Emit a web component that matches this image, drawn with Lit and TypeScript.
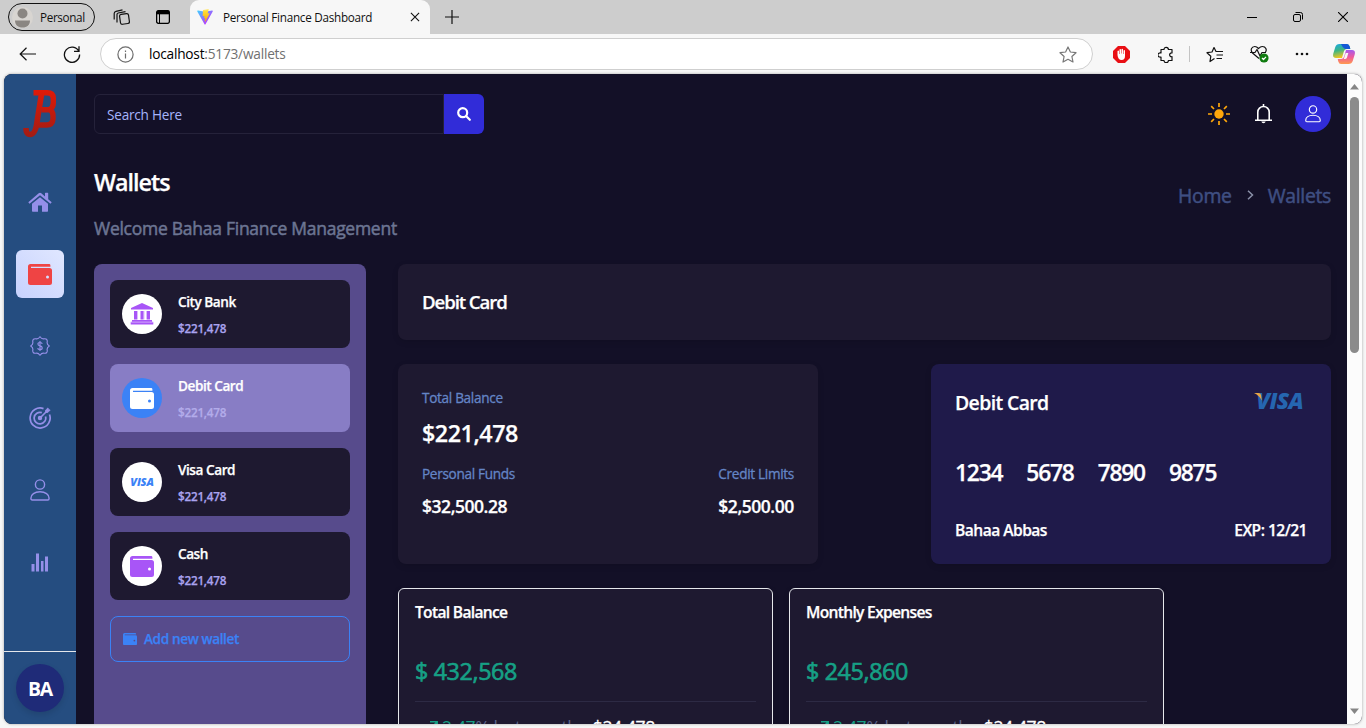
import { LitElement, html, css } from "lit";
import { customElement } from "lit/decorators.js";

const wallet = (w = 24) => html`<svg width=${w} height=${(w * 21) / 24} viewBox="0 0 24 21" fill="currentColor"><path fill-rule="evenodd" d="M2.6 0H21C21.9 0 22.4.6 22.4 1.4V2.7H3V3.9H21.5A2.5 2.5 0 0 1 24 6.4V18.5A2.5 2.5 0 0 1 21.5 21H2.5A2.5 2.5 0 0 1 0 18.5V2.6A2.6 2.6 0 0 1 2.6 0ZM19.5 11.4A1.5 1.5 0 1 0 19.5 14.4A1.5 1.5 0 1 0 19.5 11.4Z"/></svg>`;
const person = (w: number, sw: number) => html`<svg width=${w} height=${w * 1.1} viewBox="0 0 20 22" fill="none" stroke="currentColor" stroke-width=${sw} stroke-linejoin="round"><circle cx="10" cy="5.5" r="4.6"/><path d="M.9 19.2C.9 15.4 4.6 12.8 10 12.8S19.1 15.4 19.1 19.2C19.1 20.6 18.6 21 17.8 21H2.2C1.4 21 .9 20.6 .9 19.2Z"/></svg>`;
const bank = html`<svg width="24" height="22" viewBox="0 0 24 22" fill="currentColor"><path d="M12 0 23 5V6.600H1V5ZM4 8H7V16.500H4ZM10.500 8H13.500V16.500H10.500ZM17 8H20V16.500H17ZM2 17H22V18.700H2ZM.7 19.600H23.300V21.600H.7Z"/><path opacity=".4" d="M7 8H8V16.500H7ZM13.500 8H14.500V16.500H13.500ZM16 8H17V16.500H16ZM.7 18.500H23.300V20H.7Z"/></svg>`;

const wallets = [
  { name: "City Bank", icon: bank, look: "violet" },
  { name: "Debit Card", icon: wallet(), look: "blue" },
  { name: "Visa Card", icon: html`<span class="visa small">VISA</span>`, look: "visaicon" },
  { name: "Cash", icon: wallet(), look: "violet" },
];
const stats = [
  { name: "Total Balance", amount: "$ 432,568" },
  { name: "Monthly Expenses", amount: "$ 245,860" },
];

@customElement("app-root")
export class AppRoot extends LitElement {
  static styles = css`
    :host { display: block; width: 1366px; height: 728px; overflow: hidden; background: #f7f7f7;
      font-family: "Open Sans", "Noto Sans", sans-serif; letter-spacing: -0.014em; }
    * { box-sizing: border-box; }
    svg { display: block; flex: none; }
    .tabs { height: 34px; background: #cdcdcd; display: flex; align-items: center; font-size: 11.7px; color: #111; }
    .profile { margin-left: 8px; width: 87px; height: 28px; border: 1.3px solid #111; border-radius: 14px; display: flex; align-items: center; gap: 7px; padding-left: 3px; }
    .profile span { padding-bottom: 1px; letter-spacing: -.03em; }
    .ws { margin-left: 18px; }
    .ta { margin-left: 26px; }
    .tab { margin-left: 20px; width: 240px; height: 34px; background: #f7f7f7; border-radius: 9px 9px 0 0; display: flex; align-items: center; padding: 0 10px 0 7px; }
    .tab span { margin-left: 10px; flex: 1; white-space: nowrap; letter-spacing: -0.022em; padding-bottom: 1px; }
    .plus { margin-left: 15px; }
    .wctl { margin-left: auto; display: flex; align-items: center; gap: 35px; margin-right: 18px; }
    .wctl svg:last-child { margin-left: -1px; }
    .bar { height: 40px; display: flex; align-items: center; background: #f7f7f7; }
    .back { margin-left: 19px; }
    .reload { margin-left: 26px; }
    .url { margin-left: 19px; width: 993px; height: 32px; border: 1px solid #cfcfcf; border-radius: 16px; background: #fff; display: flex; align-items: center; padding: 0 15px 0 16px; font-size: 13.7px; color: #707070; }
    .url span { margin-left: 15px; flex: 1; padding-bottom: 1px; }
    .url b { font-weight: 400; color: #000; }
    .ext { display: flex; align-items: center; flex: 1; }
    .e1 { margin-left: 19.5px; } .e2 { margin-left: 28px; }
    .sep { width: 1px; height: 16px; background: #c4c4c4; margin-left: 15px; }
    .e3 { margin-left: 16px; } .e4 { margin-left: 27px; } .e5 { margin-left: 26px; } .e6 { margin-left: 24px; }
    .view { margin: 0 4px; height: 650px; border-radius: 8px; overflow: hidden; display: flex; background: #131027; box-shadow: 0 0 3px rgba(0,0,0,.35); }
    .side { width: 72px; background: #254d80; display: flex; flex-direction: column; align-items: center; color: #958fe8; }
    .logo { height: 80px; padding-top: 15px; }
    .nav { display: flex; flex-direction: column; gap: 24px; padding-top: 24px; flex: 1; }
    .nav div { width: 48px; height: 48px; border-radius: 6px; display: flex; align-items: center; justify-content: center; }
    .nav .on { background: linear-gradient(45deg, #c7d2fe, #e0e7ff); color: #ef4444; }
    .foot { width: 100%; height: 73px; border-top: 1px solid #e5e7eb; display: flex; justify-content: center; padding-top: 12px; }
    .ba { width: 48px; height: 48px; border-radius: 50%; background: #1f2b78; color: #fff; font-size: 19.4px; font-weight: 700; display: flex; align-items: center; justify-content: center; letter-spacing: -.06em; box-shadow: 0 3px 6px rgba(0,0,0,.12); }
    .main { flex: 1; padding: 20px 16px 0 18px; height: 650px; overflow: hidden; color: #fff; }
    .top { height: 40px; display: flex; align-items: center; }
    .search { width: 350px; height: 40px; border: 1px solid #25223a; border-radius: 6px 0 0 6px; color: #a5b4fc; font-size: 13.6px; line-height: 40px; padding-left: 12px; }
    .go { width: 40px; height: 40px; background: #312cd8; border-radius: 0 6px 6px 0; display: flex; align-items: center; justify-content: center; }
    .acts { margin-left: auto; display: flex; align-items: center; }
    .bell { margin-left: 25px; margin-right: 23px; }
    .user { width: 36px; height: 36px; border-radius: 50%; background: #312cd8; display: flex; align-items: center; justify-content: center; }
    .title { display: flex; justify-content: space-between; height: 130px; padding-top: 32px; }
    .bold { font-weight: 600; -webkit-text-stroke: .25px currentColor; }
    h1 { margin: 0; font-size: 23.3px; line-height: 32px; letter-spacing: -.042em; }
    .sub { margin-top: 14px; font-size: 17.5px; line-height: 32px; color: #6c7593; letter-spacing: -.015em; -webkit-text-stroke: .5px currentColor; }
    .crumb { display: flex; align-items: center; height: 30px; margin-top: 14px; font-size: 19.4px; color: #3f4f82; letter-spacing: -.016em; -webkit-text-stroke: .5px currentColor; }
    .crumb svg { margin: 0 14px 1px 15px; }
    .cols { display: flex; gap: 32px; align-items: flex-start; }
    .list { width: 272px; height: 640px; border-radius: 8px; background: #574b8c; padding: 16px; display: flex; flex-direction: column; gap: 16px; }
    .item { height: 68px; background: #1e1930; border-radius: 8px; display: flex; align-items: center; padding: 2px 0 0 12px; gap: 16px; }
    .item.on { background: #887dc5; }
    .dot { width: 40px; height: 40px; margin-top: -2px; border-radius: 50%; background: #fff; display: flex; align-items: center; justify-content: center; }
    .violet { color: #a855f7; } .visaicon { color: #3b82f6; }
    .blue { background: #3b82f6; color: #fff; }
    .nm { font-size: 13.6px; line-height: 24px; letter-spacing: -.033em; }
    .am { font-size: 11.7px; line-height: 24px; margin-top: 2px; color: #a9a2ee; }
    .item.on .am { color: #b3acea; }
    .add { height: 46px; border: 1px solid #3b82f6; border-radius: 8px; display: flex; align-items: center; gap: 7px; padding-left: 12px; color: #3b82f6; font-size: 13.6px; letter-spacing: -.028em; }
    .add span { padding-bottom: 1px; }
    .detail { flex: 1; display: flex; flex-direction: column; gap: 24px; }
    .card { background: #1e1930; border-radius: 8px; box-shadow: 0 2px 6px rgba(0,0,0,.12); }
    .head { height: 76px; padding: 23px 24px; font-size: 18.6px; line-height: 30px; letter-spacing: -.058em; }
    .pair { display: flex; justify-content: space-between; }
    .balance { width: 420px; height: 200px; padding: 22px 24px; }
    .lab { color: #6485c6; font-size: 13.6px; line-height: 24px; letter-spacing: -.023em; -webkit-text-stroke: .3px currentColor; }
    .big { font-size: 23.3px; line-height: 32px; margin: 7px 0 13px; letter-spacing: -.02em; }
    .mid { font-size: 17.5px; line-height: 28px; margin-top: 6px; letter-spacing: -.026em; }
    .row { display: flex; justify-content: space-between; align-items: center; }
    .credit { width: 400px; height: 200px; background: #1f1a4a; padding: 24px; }
    .cn { font-size: 19.4px; line-height: 30px; letter-spacing: -.031em; }
    .brand { display: flex; align-items: flex-start; margin: -5px 4px 0 0; }
    .visa { font-style: italic; font-weight: 800; letter-spacing: -.02em; -webkit-text-stroke: 0; }
    .visa.small { font-size: 11px; line-height: 12px; }
    .visa.large { font-size: 22.5px; line-height: 22px; color: #2566b0; margin-left: -6px; letter-spacing: -.03em; }
    .wedge { position: relative; z-index: 1; margin: 3px 0 0 0; }
    .nums { display: flex; gap: 24px; font-size: 22.8px; line-height: 32px; margin-top: 39px; letter-spacing: -.053em; }
    .own { font-size: 15.6px; line-height: 24px; margin-top: 29px; letter-spacing: -.034em; }
    .stats { display: flex; gap: 16px; }
    .stat { width: 375px; height: 180px; border: 1px solid #e5e7eb; padding: 11px 16px; border-radius: 6px; }
    .st { font-size: 15.6px; line-height: 24px; letter-spacing: -.044em; }
    .sa { font-size: 23.3px; line-height: 32px; margin-top: 31px; color: #16a085; padding-bottom: 14px; border-bottom: 1px solid #2d2a44; letter-spacing: -.016em; -webkit-text-stroke: .65px currentColor; }
    .tr { display: flex; align-items: center; padding-left: 14px; margin-top: 11px; font-size: 17.5px; line-height: 28px; letter-spacing: -.02em; color: #5b648a; white-space: pre; }
    .tr svg { margin-top: -4px; }
    .tr i { font-style: normal; color: #16a085; margin-left: 4px; }
    .tr b { font-weight: 400; color: #fff; margin-left: 15px; -webkit-text-stroke: .3px #fff; }
    .scroll { width: 15px; background: #fcfcfc; display: flex; flex-direction: column; align-items: center; padding: 10px 0; }
    .thumb { width: 9px; height: 256px; margin-top: 7px; background: #8b8b8b; border-radius: 5px; }
    .down { margin-top: auto; }
  `;

  chrome() {
    return html`
      <div class="tabs">
        <div class="profile"><svg width="21" height="21" viewBox="0 0 21 21"><circle cx="10.500" cy="10.500" r="10.500" fill="#d8d5d1"/><circle cx="10.500" cy="6.500" r="5" fill="#8a8682"/><path d="M3 13.500H18C18 18 15 20.500 10.500 20.500S3 18 3 13.500Z" fill="#8a8682"/></svg><span>Personal</span></div>
        <svg class="ws" width="17" height="17" viewBox="0 0 17 17" fill="none" stroke="#111" stroke-width="1.200" stroke-linejoin="round"><rect x="7" y="5" width="9" height="10" rx="1.800" transform="rotate(-8 11 10)"/><path d="M4 13.500V5.500Q4 4.300 5.200 4L12.500 2.600M1.200 10.500V4.500Q1.200 2.700 3 2.300L9.500.8"/></svg>
        <svg class="ta" width="14" height="14" viewBox="0 0 14 14"><rect x=".6" y=".6" width="12.800" height="12.800" rx="2" fill="none" stroke="#000" stroke-width="1.300"/><path d="M1 1H13V4.300H1Z"/><path d="M3.500 4V13" stroke="#000"/></svg>
        <div class="tab">
          <svg width="16" height="16" viewBox="0 0 32 32"><defs><linearGradient id="va" x2=".8" y2=".8"><stop stop-color="#41D1FF"/><stop offset="1" stop-color="#BD34FE"/></linearGradient><linearGradient id="vb" x2="0" y2="1"><stop stop-color="#FFEA83"/><stop offset=".2" stop-color="#FFDD35"/><stop offset="1" stop-color="#FFA800"/></linearGradient></defs><path d="M31.500 4.800 17 30.600Q16 32 15 30.600L.6 4.800Q0 3 2 3.200L16 5.700 30 3.200Q32 3 31.500 4.800Z" fill="url(#va)"/><path d="M23 0 12.500 2Q12 2.200 12 2.700L11.300 13.600Q11.300 14.400 12.200 14.300L15 13.700 14.200 18Q14 19 15 18.700L16.800 18.200 15.500 24.500Q16 26 17 24.400L25 9.500Q25.400 8.500 24.300 8.500L21.200 9.100 23.500.7Q23.700 0 23 0Z" fill="url(#vb)"/></svg>
          <span>Personal Finance Dashboard</span>
          <svg width="10" height="10" viewBox="0 0 11 11" stroke="#111" stroke-width="1.200"><path d="M1 1 10 10M10 1 1 10"/></svg>
        </div>
        <svg class="plus" width="14" height="14" viewBox="0 0 14 14" stroke="#111" stroke-width="1.200"><path d="M0 7H14M7 0V14"/></svg>
        <div class="wctl">
          <svg width="10" height="10" viewBox="0 0 10 10" stroke="#000"><path d="M0 5.500H10"/></svg>
          <svg width="12" height="12" viewBox="0 0 12 12" fill="none" stroke="#000"><rect x="1.500" y="3.500" width="7" height="7" rx="1.500"/><path d="M3.500 1.500H8.500Q10.500 1.500 10.500 3.500V8.500"/></svg>
          <svg width="10" height="10" viewBox="0 0 10 10" stroke="#000" stroke-width="1.100"><path d="M0 0 10 10M10 0 0 10"/></svg>
        </div>
      </div>
      <div class="bar">
        <svg class="back" width="17" height="14" viewBox="0 0 17 14" fill="none" stroke="#111" stroke-width="1.200"><path d="M17 7H1.500M7.500 .8 1.200 7 7.500 13.200"/></svg>
        <svg class="reload" width="19" height="18" viewBox="0 0 19 18" fill="none" stroke="#111" stroke-width="1.300"><path d="M16.800 6.300A7.600 7.600 0 1 0 17.600 9.500M17 1.200V6.300H12"/></svg>
        <div class="url">
          <svg width="17" height="17" viewBox="0 0 17 17" fill="none" stroke="#6d6d6d" stroke-width="1.200"><circle cx="8.500" cy="8.500" r="7.600"/><path d="M8.500 7.500V12.500M8.500 4.500V6"/></svg>
          <span><b>localhost</b>:5173/wallets</span>
          <svg width="18" height="17" viewBox="0 0 18 17" fill="none" stroke="#777" stroke-width="1.200" stroke-linejoin="round"><path d="M9 1 11.400 6 17 6.700 12.900 10.500 14 16 9 13.300 4 16 5.100 10.500 1 6.700 6.600 6Z"/></svg>
        </div>
        <div class="ext">
          <svg class="e1" width="17" height="17" viewBox="0 0 17 17"><path d="M5 0H12L17 5V12L12 17H5L0 12V5Z" fill="#e90f14"/><path d="M4.500 9V5Q5.300 4 6 5V8H6.500V3.500Q7.300 2.500 8 3.500V7.500H8.500V3.200Q9.300 2.200 10 3.200V8H10.500V4.500Q11.300 3.500 12 4.500V10Q12 14 8.600 14 5 14 4.500 9Z" fill="#fff"/></svg>
          <svg class="e2" width="16" height="17" viewBox="0 0 16 17" fill="none" stroke="#111" stroke-width="1.200" stroke-linejoin="round"><path d="M3 3.500H6A2.200 2.200 0 1 1 10.400 3.500H14V7C10.800 6.500 10.800 11.200 14 10.700V14.500H10.400A2.200 2.200 0 0 1 6 14.500H3V11A2.200 2.200 0 1 1 3 7Z"/></svg>
          <div class="sep"></div>
          <svg class="e3" width="17" height="17" viewBox="0 0 17 17" fill="none" stroke="#111" stroke-width="1.200" stroke-linejoin="round"><path d="M8.500 12.500 4 15.500 4.800 10.300 1 6.700 6 6 8 1.500 10 5.500H17M10.500 9H17M10.500 12.500H16"/></svg>
          <svg class="e4" width="19" height="18" viewBox="0 0 19 18" fill="none" stroke="#111" stroke-width="1.200" stroke-linejoin="round"><path d="M9 13.500 2.500 8C0 5 1.500 1.500 4.800 1.500 7 1.500 8 3 8.500 3.500 9 3 10.200 1.500 12.300 1.500 16 1.500 17 5 15.500 7M0 7.500H5L7 4.500 10 11 12 7.500H16"/><circle cx="14" cy="13" r="4.600" fill="#107c10" stroke="none"/><path d="M12 13 13.500 14.500 16 11.800" stroke="#fff"/></svg>
          <svg class="e5" width="14" height="4" viewBox="0 0 14 4" fill="#111"><circle cx="2" cy="2" r="1.300"/><circle cx="7" cy="2" r="1.300"/><circle cx="12" cy="2" r="1.300"/></svg>
          <svg class="e6" width="22" height="20" viewBox="0 0 22 20"><defs><linearGradient id="ca" x2=".3" y2="1"><stop stop-color="#18a8e8"/><stop offset=".5" stop-color="#3db583"/><stop offset="1" stop-color="#f5c51c"/></linearGradient><linearGradient id="cb" x2="0" y2="1"><stop stop-color="#a35af0"/><stop offset=".5" stop-color="#ef5a9d"/><stop offset="1" stop-color="#ff9a4d"/></linearGradient></defs><path d="M6.500 0H14Q16 0 16.700 2.500L17.300 5H14Q11.500 5 10.700 8L9 14H3Q-.8 14 .3 9.500L2.300 3Q3.200 0 6.500 0Z" fill="url(#ca)"/><path d="M8 0H14Q16 0 16.700 2.500L17.300 5H12Q9.500 4 8 0Z" fill="#1559d6"/><path d="M15.500 20H8Q6 20 5.300 17.500L4.700 15H8Q10.500 15 11.300 12L13 6H19Q22.800 6 21.700 10.500L19.700 17Q18.800 20 15.500 20ZM12.700 9 10.800 15H12.300Q13.600 15 14 13.600L15.300 9Z" fill-rule="evenodd" fill="url(#cb)"/></svg>
        </div>
      </div>`;
  }

  sidebar() {
    return html`<div class="side">
      <div class="logo"><svg width="34" height="49" viewBox="0 0 34 49" fill="none" stroke="url(#lg)"><defs><linearGradient id="lg" gradientUnits="userSpaceOnUse" x1="0" y1="0" x2="0" y2="49"><stop stop-color="#e01a08"/><stop offset="1" stop-color="#a01c14"/></linearGradient></defs><path d="M10.500 3.800H24Q30.300 3.800 30.300 9.500V14Q30.300 18.500 26.500 20.700 30 22.500 30 26.500V30Q29.500 36 23.500 36H15.500M18.500 20.700H26" stroke-width="5.400"/><path d="M18.500 5 14 33Q12.500 45.500 7 45.500 3 45.500 3 39" stroke-width="5.600"/></svg></div>
      <div class="nav">
        <div><svg width="24" height="20" viewBox="0 0 24 20" fill="currentColor"><path d="M12 5.300 20 11.700V19Q20 19.700 19.300 19.700H14V13.500H10V19.700H4.700Q4 19.700 4 19V11.700Z"/><path d="M.3 10.200 10.700 1.300Q12 .3 13.300 1.300L17 4.500V1.400Q17 .8 17.600.8H19.600Q20.200.8 20.200 1.400V7.200L23.700 10.200 22.500 11.700 12 3.200 1.500 11.700Z"/></svg></div>
        <div class="on">${wallet()}</div>
        <div><svg width="20" height="20" viewBox="0 0 20 20" fill="none" stroke="currentColor" stroke-width="1.150" stroke-linejoin="round"><path d="M10 .7Q11.500 2.900 13.300 2.900 16 2.400 16.600 3.400 17.600 4 17.100 6.700 17.100 8.500 19.300 10 17.100 11.500 17.100 13.300 17.600 16 16.600 16.600 16 17.600 13.300 17.100 11.500 17.100 10 19.300 8.500 17.100 6.700 17.100 4 17.600 3.400 16.600 2.400 16 2.900 13.300 2.900 11.500.7 10 2.900 8.500 2.900 6.700 2.400 4 3.400 3.400 4 2.400 6.700 2.900 8.500 2.900 10 .7Z"/><path d="M12.200 7.800Q12 6.500 10 6.500 7.900 6.500 7.900 8.100 7.900 9.600 10 9.900T12.200 11.900Q12.200 13.500 10 13.500 7.900 13.500 7.700 12.100M10 5V15"/></svg></div>
        <div><svg width="22" height="22" viewBox="0 0 22 22" fill="none" stroke="currentColor" stroke-width="1.700"><path d="M14.500 1.600A10 10 0 1 0 20.500 7.500M12.800 5.600A5.800 5.800 0 1 0 16.500 9.400M11 11 17.500 4.500"/><circle cx="11" cy="11" r="1.400" fill="currentColor"/><path d="M16.500 5.500V3.200L19 .9 19.500 2.600 21.200 3 18.800 5.500Z" fill="currentColor" stroke-width=".8"/></svg></div>
        <div>${person(20, 1.4)}</div>
        <div><svg width="18" height="19" viewBox="0 0 18 19" fill="currentColor"><path d="M.5 11H3.500V18.500H.5ZM5 .5H8V18.500H5ZM10 8H12.500V18.500H10ZM14 3.500H17V18.500H14Z"/></svg></div>
      </div>
      <div class="foot"><div class="ba">BA</div></div>
    </div>`;
  }

  render() {
    return html`${this.chrome()}
      <div class="view">
        ${this.sidebar()}
        <div class="main">
          <div class="top">
            <div class="search">Search Here</div>
            <div class="go"><svg width="14" height="14" viewBox="0 0 14 14" fill="none" stroke="#fff" stroke-width="2.200" stroke-linecap="round"><circle cx="5.700" cy="5.700" r="4.500"/><path d="M9.300 9.300 12.800 12.800"/></svg></div>
            <div class="acts">
              <svg width="22" height="22" viewBox="0 0 22 22" stroke="#ffa70b" stroke-width="1.700"><circle cx="11" cy="11" r="4.700" fill="#ffa70b" stroke="none"/><path d="M11 0V4M11 18V22M0 11H4M18 11H22M3.200 3.200 6 6M16 16 18.800 18.800M3.200 18.800 6 16M16 6 18.800 3.200"/></svg>
              <svg class="bell" width="17" height="20" viewBox="0 0 17 20" fill="none" stroke="#fff" stroke-width="1.600" stroke-linejoin="round"><path d="M2.800 15.700V8.200A5.700 5.700 0 0 1 14.200 8.200V15.700M0 16.300H17M8.500 0V2"/><path d="M6.300 17.500A2.300 2.300 0 0 0 10.700 17.500Z" fill="#fff" stroke="none"/></svg>
              <div class="user">${person(16, 1.45)}</div>
            </div>
          </div>
          <div class="title">
            <div><h1 class="bold">Wallets</h1><div class="sub">Welcome Bahaa Finance Management</div></div>
            <div class="crumb">Home<svg width="7" height="10" viewBox="0 0 7 10" fill="none" stroke="#8a90a8" stroke-width="1.500"><path d="M1 .8 5.500 5 1 9.200"/></svg>Wallets</div>
          </div>
          <div class="cols">
            <div class="list">
              ${wallets.map((w, i) => html`<div class="item ${i === 1 ? "on" : ""}"><div class="dot ${w.look}">${w.icon}</div><div><div class="nm bold">${w.name}</div><div class="am bold">$221,478</div></div></div>`)}
              <div class="add bold">${wallet(14)}<span>Add new wallet</span></div>
            </div>
            <div class="detail">
              <div class="card head bold">Debit Card</div>
              <div class="pair">
                <div class="card balance">
                  <div class="lab">Total Balance</div><div class="big bold">$221,478</div>
                  <div class="row"><div><div class="lab">Personal Funds</div><div class="mid bold">$32,500.28</div></div><div><div class="lab">Credit Limits</div><div class="mid bold">$2,500.00</div></div></div>
                </div>
                <div class="card credit bold">
                  <div class="row"><span class="cn">Debit Card</span><div class="brand"><svg class="wedge" width="8" height="9" viewBox="0 0 8 9"><path d="M0 0H4.500Q6.700 0 7 2L7.800 7.500Q5 2 0 0Z" fill="#e6a445"/></svg><span class="visa large">VISA</span></div></div>
                  <div class="nums">${["1234", "5678", "7890", "9875"].map((n) => html`<span>${n}</span>`)}</div>
                  <div class="row own"><span>Bahaa Abbas</span><span>EXP: 12/21</span></div>
                </div>
              </div>
              <div class="stats">
                ${stats.map((s) => html`<div class="card stat"><div class="st bold">${s.name}</div><div class="sa">${s.amount}</div><div class="tr"><svg width="9" height="9" viewBox="0 0 9 9" fill="none" stroke="#16a085" stroke-width="1.500"><path d="M1 .8H8.200V8M8.200.8.8 8.200"/></svg><i>2.47</i>% last month<b>$24,478</b></div></div>`)}
              </div>
            </div>
          </div>
        </div>
        <div class="scroll"><svg width="9" height="6" viewBox="0 0 9 6" fill="#858585"><path d="M4.500 0 9 5.500H0Z"/></svg><div class="thumb"></div><svg class="down" width="9" height="6" viewBox="0 0 9 6" fill="#858585"><path d="M0 .5H9L4.500 6Z"/></svg></div>
      </div>`;
  }
}
